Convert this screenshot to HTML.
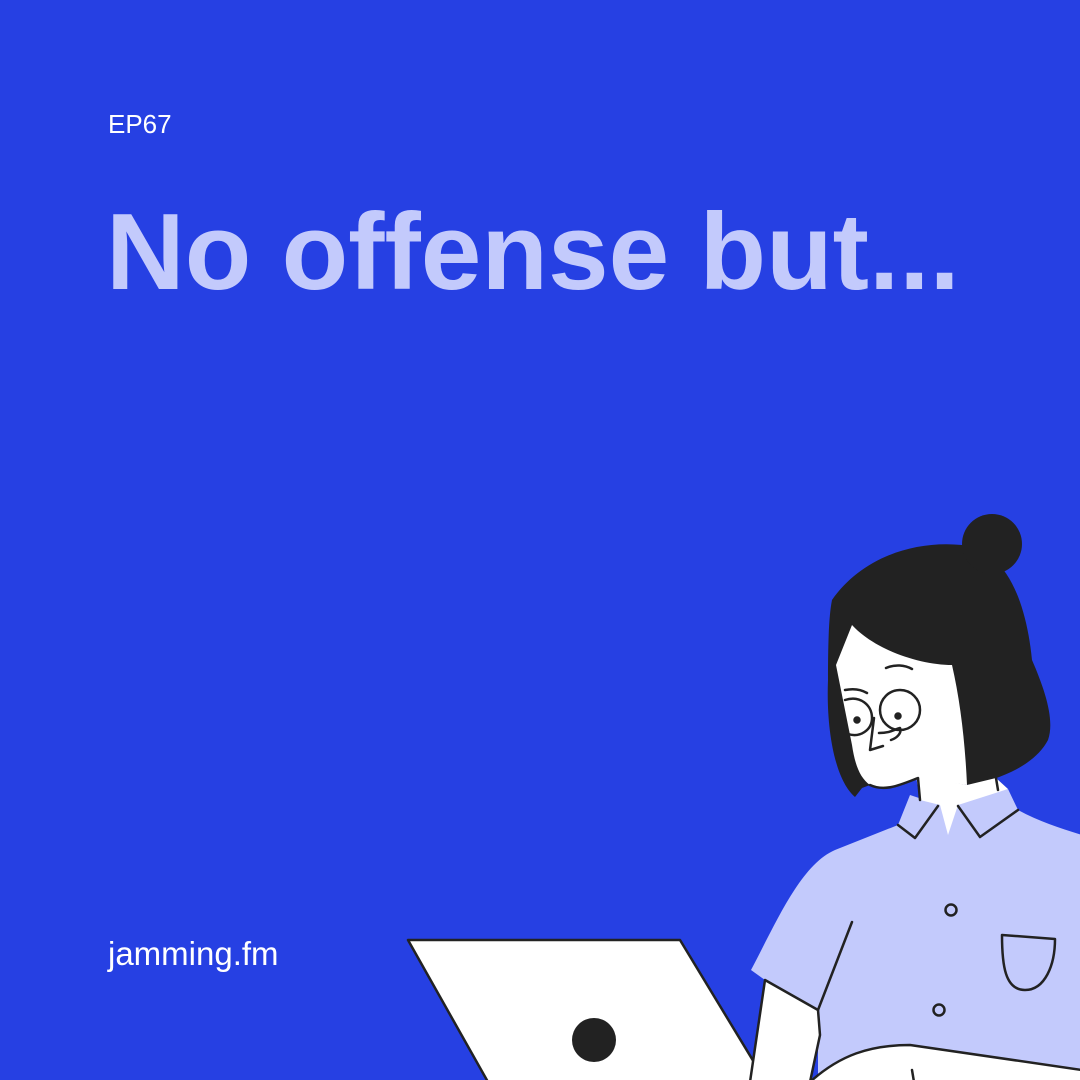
<!DOCTYPE html>
<html><head><meta charset="utf-8"><style>
html,body{margin:0;padding:0}
body{width:1080px;height:1080px;background:#2640e3;position:relative;overflow:hidden;font-family:"Liberation Sans",sans-serif}
.ep{position:absolute;left:108px;top:108px;color:#fff;font-size:26px;line-height:32px}
.t{position:absolute;left:106px;top:192px;color:#c3cafc;font-size:109px;font-weight:bold;line-height:120px;white-space:nowrap}
.j{position:absolute;left:108px;top:934px;color:#fff;font-size:33px;line-height:40px}
svg{position:absolute;left:0;top:0}
</style></head><body>
<div class="ep">EP67</div>
<div class="t">No offense but...</div>
<div class="j">jamming.fm</div>
<svg width="1080" height="1080" viewBox="0 0 1080 1080">
<g stroke="#222" stroke-width="2.5" fill="none" stroke-linejoin="round" stroke-linecap="round">
<path d="M408 940 L680 940 L766 1082 L488 1082 Z" fill="#fff"/>
<circle cx="594" cy="1040" r="22" fill="#222" stroke="none"/>
<path d="M751 970 C775 925 800 865 835 850 L898 825 L910 795 L940 805 L1008 789 L1018 810 C1040 822 1060 828 1082 835 L1082 1082 L818 1082 L818 1010 L765 980 Z" fill="#c3cafc" stroke="none"/>
<path d="M765 980 L818 1010 L820 1035 L810 1082 L750 1082 Z" fill="#fff"/>
<path d="M818 1010 L852 922"/>
<path d="M832 600 C860 560 910 540 962 545 C1000 548 1025 590 1032 660 C1045 690 1055 720 1048 740 C1035 765 1000 780 967 785 L918 778 C900 785 885 792 870 785 L862 788 L855 797 C835 780 826 730 828 680 C828 640 829 615 832 600 Z" fill="#222" stroke="none"/>
<circle cx="992" cy="544" r="30" fill="#222" stroke="none"/>
<path d="M916 776 L967 785 L996 778 L1008 789 L958 805 L948 835 L940 805 L920 800 Z" fill="#fff" stroke="none"/>
<path d="M918 778 L920 800 M996 778 L998 790"/>
<path d="M898 825 L915 838 L938 806 M958 806 L980 837 L1018 810"/>
<path d="M852 625 C875 650 920 665 952 665 C960 700 965 740 967 785 L918 778 C900 785 885 792 870 785 C860 778 855 765 852 745 L836 665 Z" fill="#fff" stroke="none"/>
<path d="M918 778 C900 785 885 792 870 785"/>
<circle cx="900" cy="710" r="20"/>
<path d="M845 700 C860 695 872 705 872 718 C872 730 860 738 848 734"/>
<path d="M845 690 C855 688 862 690 867 693 M886 668 C895 664 905 665 912 669"/>
<circle cx="857" cy="720" r="2.5" fill="#222"/>
<circle cx="898" cy="716" r="2.5" fill="#222"/>
<path d="M874 718 L870 750 L883 746 M879 733 C890 733 893 730 900 728 C902 733 897 738 891 740"/>
<circle cx="951" cy="910" r="5.5"/>
<circle cx="939" cy="1010" r="5.5"/>
<path d="M1002 935 L1055 939 C1055 965 1045 990 1025 990 C1005 990 1002 965 1002 935 Z"/>
<path d="M810 1082 C840 1055 870 1045 910 1045 L1082 1070 L1082 1082 Z" fill="#fff"/>
<path d="M912 1070 L914 1082"/>
</g>
</svg>
</body></html>
